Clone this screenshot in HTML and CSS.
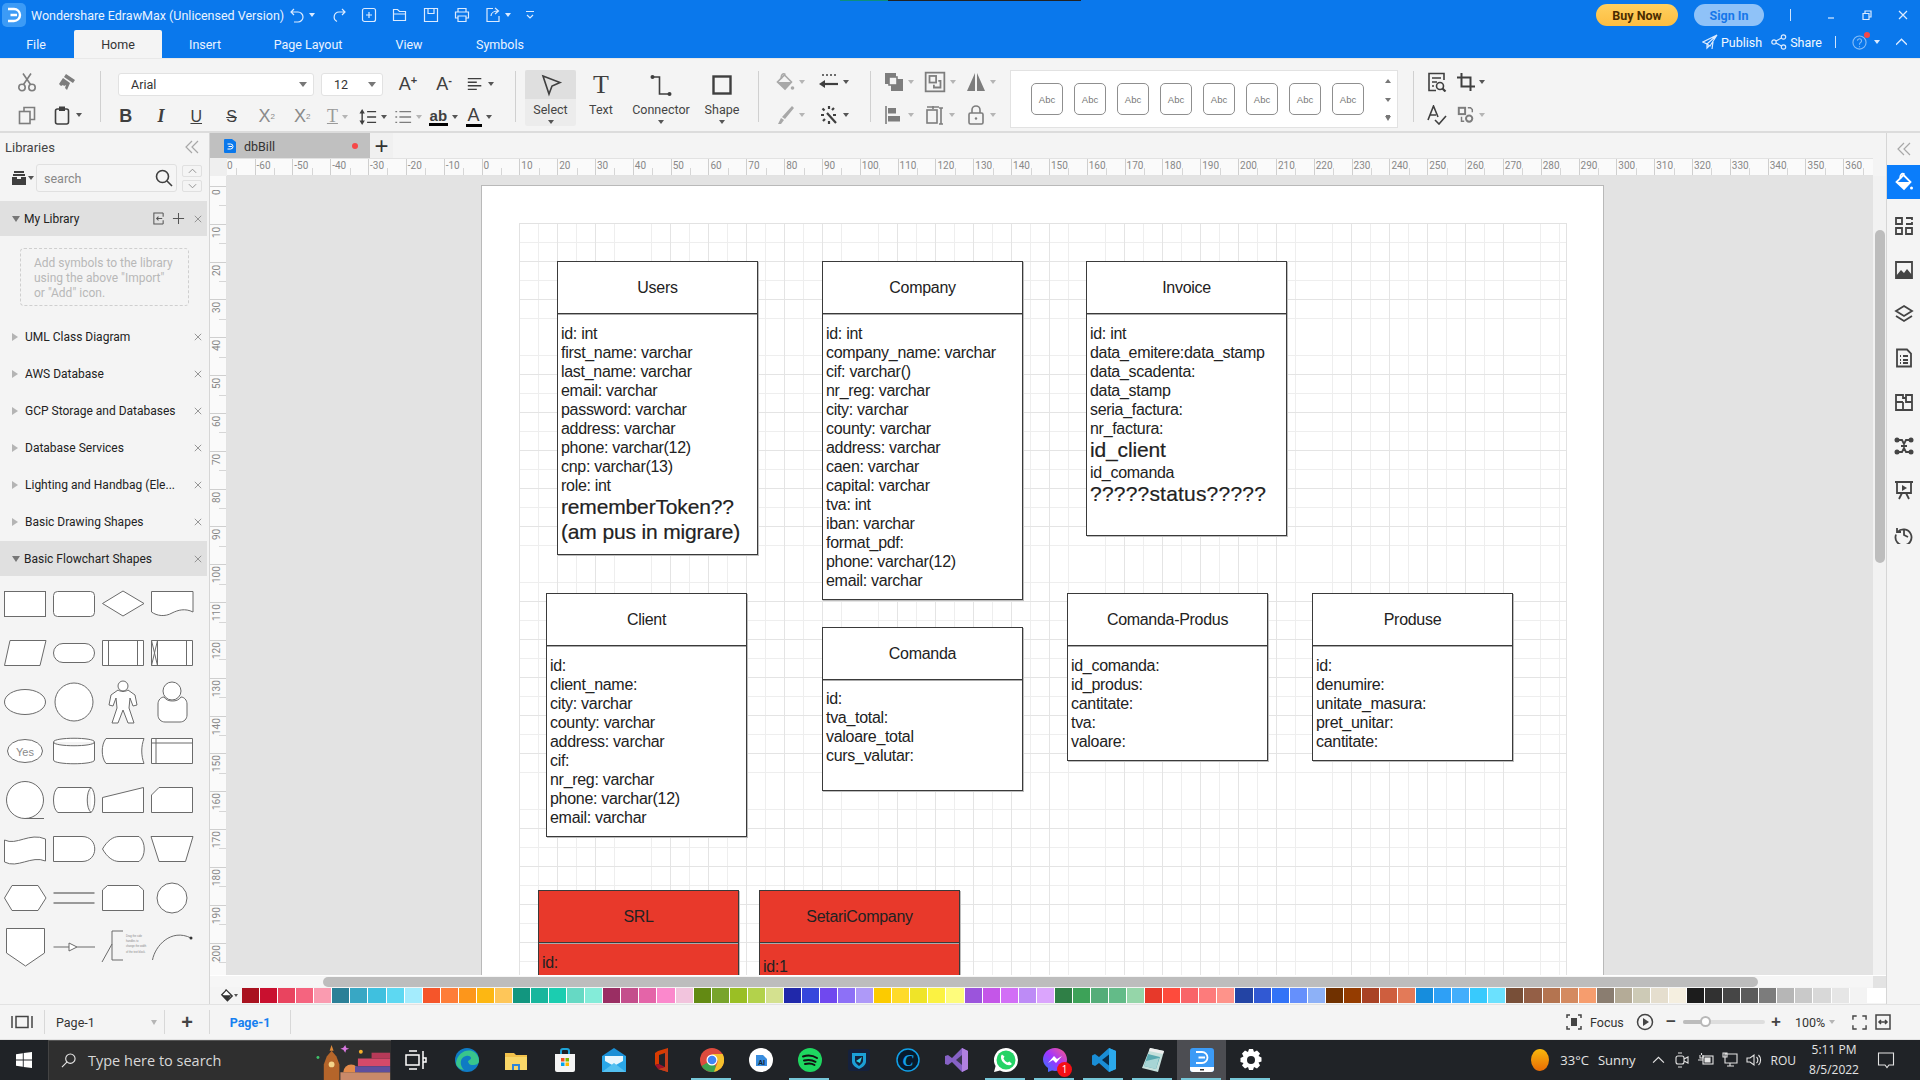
FILE: index.html
```html
<!DOCTYPE html>
<html lang="en">
<head>
<meta charset="utf-8">
<title>Wondershare EdrawMax</title>
<link rel="stylesheet" href="styles.css">
</head>
<body>
<svg class="defs" aria-hidden="true">
  <symbol id="i-cut" viewBox="0 0 20 20"><circle cx="5" cy="15.500" r="3.200"/><circle cx="15" cy="15.500" r="3.200"/><path d="M6.500 12.500 14 1.500M13.500 12.500 6 1.500"/></symbol>
  <symbol id="i-painter" viewBox="0 0 20 20"><path class="f" d="M9 2l9 6-2 3-9-6zM6 6l7 5-3 7-2-2 1-3-2 1-1-1-2 1-2-2z"/></symbol>
  <symbol id="i-copy" viewBox="0 0 20 20"><rect x="2.500" y="6.500" width="10.500" height="12"/><path d="M7 6V2.500h10.500V14.500H13"/></symbol>
  <symbol id="i-paste" viewBox="0 0 20 20"><rect x="3.500" y="4" width="13" height="15" rx="2"/><rect class="f" x="7" y="1.500" width="6" height="4.500"/></symbol>
  <symbol id="i-alignl" viewBox="0 0 20 20"><path d="M2 4h15M2 8h10M2 12h15M2 16h10"/></symbol>
  <symbol id="i-spacing" viewBox="0 0 20 20"><path d="M9 4h10M9 10h10M9 16h10"/><path class="f" d="M3.500 1 6.500 6h-6zM3.500 19l3-5h-6z"/><path d="M3.500 5v10"/></symbol>
  <symbol id="i-list" viewBox="0 0 20 20"><path d="M6 4h13M6 10h13M6 16h13M1.500 4h2M1.500 10h2M1.500 16h2"/></symbol>
  <symbol id="i-select" viewBox="0 0 24 24"><path d="M4 3 21 9.500 13 13 10 21z"/></symbol>
  <symbol id="i-connector" viewBox="0 0 24 24"><circle class="f" cx="3.500" cy="4" r="2"/><circle class="f" cx="20.500" cy="21" r="2"/><path d="M4 4h6.500v17h9"/></symbol>
  <symbol id="i-shape" viewBox="0 0 24 24"><rect x="3.500" y="3.500" width="17" height="17"/></symbol>
  <symbol id="i-bucket" viewBox="0 0 20 20"><path d="M9.500 3l7 7-6.500 7-7.500-7z"/><path class="f" d="M3 10h13.500L10 17z"/><path d="M6.500 7C5.500 3 8 0.500 10.500 2.500"/><circle class="f" cx="17.500" cy="16" r="1.800"/></symbol>
  <symbol id="i-linestyle" viewBox="0 0 20 20"><path d="M3 3h2M7 3h2M11 3h2M15 3h2"/><path class="thick" d="M5 12h14"/><path class="f" d="M0 12l6-4v8z"/></symbol>
  <symbol id="i-pen" viewBox="0 0 20 20"><path class="f" d="M17 1l2 2-9 11-3-2zM6 13l3 2-3 4-3 0z"/></symbol>
  <symbol id="i-magic" viewBox="0 0 20 20"><path class="thick" d="M8 8l9 10M10 1v3M2 10h3M3.500 3.500l2 2M15 3l-2 2M4 16l2-2M17 10h-3M10 16v3"/></symbol>
  <symbol id="i-front" viewBox="0 0 20 20"><rect class="f" x="1" y="1" width="11" height="11"/><rect class="f" x="7" y="7" width="12" height="12"/><rect class="w" x="5" y="5" width="8" height="8"/></symbol>
  <symbol id="i-group" viewBox="0 0 20 20"><rect x="1.500" y="1.500" width="17" height="17"/><rect x="5" y="4.500" width="6" height="6"/><path d="M9 12.500v2.500h6V9h-2"/></symbol>
  <symbol id="i-flip" viewBox="0 0 20 20"><path class="f" d="M9 1v18H1zM11 1v18h8z"/></symbol>
  <symbol id="i-align2" viewBox="0 0 20 20"><path d="M2 1v18"/><rect class="f" x="4" y="3" width="8" height="5.500"/><rect class="f" x="4" y="11" width="12" height="5.500"/></symbol>
  <symbol id="i-dist" viewBox="0 0 20 20"><path d="M2 2h12M8 1v3"/><rect x="2" y="5" width="10" height="13"/><path d="M16 3v16M14 3h4M14 19h4"/></symbol>
  <symbol id="i-lock" viewBox="0 0 20 20"><rect x="3" y="8" width="14" height="11" rx="1.500"/><path d="M6 8V5a4 4 0 0 1 8 0v3"/><circle class="f" cx="10" cy="13.500" r="1.200"/></symbol>
  <symbol id="i-find" viewBox="0 0 20 20"><path d="M17 8V1.500H2v17h7M5 6h9M5 10h5M5 14h2"/><circle cx="13" cy="14" r="3.500"/><path class="thick" d="M15.500 16.500 18.500 19.500"/></symbol>
  <symbol id="i-crop" viewBox="0 0 20 20"><path class="thick" d="M5 0v15h15M0 5h15v15"/></symbol>
  <symbol id="i-spell" viewBox="0 0 20 20"><path d="M1 15 6.500 1 11 12M3 10h6M8 15l4 4 7-8"/></symbol>
  <symbol id="i-replace" viewBox="0 0 20 20"><rect class="thick" x="2" y="2" width="7" height="7"/><circle class="thick" cx="13.500" cy="14" r="3.500"/><path d="M12 2h3l2 2v3M5 12v5h3"/></symbol>
  <symbol id="i-chev2" viewBox="0 0 14 14"><path d="M7 1 1 7l6 6M13 1 7 7l6 6"/></symbol>
  <symbol id="i-x" viewBox="0 0 10 10"><path d="M1 1l8 8M9 1 1 9"/></symbol>
  <symbol id="i-search" viewBox="0 0 18 18"><circle cx="7.500" cy="7.500" r="6"/><path d="M12 12l5 5"/></symbol>
</svg>

<div class="app">
  <div class="load-strip"></div>
  <header class="titlebar">
    <div class="title-row">
      <svg class="logo" viewBox="0 0 24 24"><rect width="24" height="24" rx="5" fill="#3c9bf6"/><path d="M6 6h6a6 6 0 0 1 0 12H6M8.500 12H15" fill="none" stroke="#fff" stroke-width="2.400"/></svg>
      <span class="app-title">Wondershare EdrawMax (Unlicensed Version)</span>
      <div class="qat">
        <svg class="qi w16" viewBox="0 0 16 16"><path d="M5 2 2 5l3 3M2 5h7a5 5 0 0 1 0 10H5"/></svg><i class="caret c-w q-c1"></i>
        <svg class="qi w16 q-redo" viewBox="0 0 16 16"><path d="M11 2l3 3-3 3M14 5H8a5 5 0 0 0-2 9.500"/></svg>
        <svg class="qi w16 q-new" viewBox="0 0 16 16"><rect x="1.500" y="1.500" width="13" height="13" rx="2"/><path d="M8 5v6M5 8h6"/></svg>
        <svg class="qi w16 q-n" viewBox="0 0 16 16"><path d="M1.500 13.500v-11h4l2 2h6v9zM1.500 7h12"/></svg>
        <svg class="qi w16 q-n" viewBox="0 0 16 16"><path d="M1.500 1.500h13v13h-13zM5 1.500v5h6v-5"/></svg>
        <svg class="qi w16 q-n" viewBox="0 0 16 16"><path d="M4 5V1.500h8V5M4 11H1.500V5h13v6H12M4 9h8v5.500H4z"/></svg>
        <svg class="qi w16 q-n" viewBox="0 0 16 16"><path d="M8 1.500H2v13h12V9M6 9c0-3 3-5 7-5M10 1l3.500 3L10 7"/></svg><i class="caret c-w q-c1"></i>
        <svg class="qi w10 q-more" viewBox="0 0 10 10"><path d="M1 1.500h8M2 5l3 3 3-3"/></svg>
      </div>
      <div class="grow"></div>
      <button class="pill buy">Buy Now</button>
      <button class="pill sign">Sign In</button>
      <span class="v-tick"></span>
      <div class="winctl">
        <svg class="qi w10" viewBox="0 0 10 10"><path d="M2 8h6"/></svg>
        <svg class="qi w10" viewBox="0 0 10 10"><path d="M1 3.500h6v6H1zM3 3.500V1h6v6H7"/></svg>
        <svg class="qi w10" viewBox="0 0 10 10"><path d="M1 1l8 8M9 1 1 9"/></svg>
      </div>
    </div>
    <div class="tab-row">
      <nav class="tabs">
        <span class="tab t-file">File</span>
        <span class="tab t-home">Home</span>
        <span class="tab t-insert">Insert</span>
        <span class="tab t-layout">Page Layout</span>
        <span class="tab t-view">View</span>
        <span class="tab t-symbols">Symbols</span>
      </nav>
      <div class="grow"></div>
      <div class="share">
        <svg class="qi w16" viewBox="0 0 16 16"><path d="M15 1 1 8l4 2 10-9-7 11-3-2v4l2-2M11 8l-1 7"/></svg>
        <span class="sh-t">Publish</span>
        <svg class="qi w16 sh-ic" viewBox="0 0 16 16"><circle cx="3" cy="8" r="2.200"/><circle cx="12.500" cy="3" r="2.200"/><circle cx="12.500" cy="13" r="2.200"/><path d="M5 7l5.500-3M5 9l5.500 3"/></svg>
        <span class="sh-t">Share</span>
        <span class="v-tick sh-sep"></span>
        <span class="help"><svg class="qi help-ic" viewBox="0 0 16 16"><circle cx="8" cy="8" r="7"/><path d="M5.800 6a2.200 2.200 0 1 1 3 2.200C8 8.600 8 9.400 8 10.500M8 12v1"/></svg><b class="dot"></b></span>
        <i class="caret c-w h-c"></i>
        <svg class="qi w10 up" viewBox="0 0 10 10"><path d="M0 7l5-5 5 5"/></svg>
      </div>
    </div>
  </header>

  <section class="ribbon">
    <div class="rb g-clip">
      <span class="cell"><svg class="ic mid"><use href="#i-cut"/></svg></span>
      <span class="cell"><svg class="ic mid"><use href="#i-painter"/></svg></span>
      <span class="cell"><svg class="ic mid"><use href="#i-copy"/></svg></span>
      <span class="cell"><svg class="ic dark"><use href="#i-paste"/></svg><i class="caret"></i></span>
    </div>
    <span class="sep"></span>
    <div class="rb g-font">
      <div class="font-top">
        <span class="sel s-font">Arial<i class="caret c-sel"></i></span>
        <span class="sel s-size">12<i class="caret c-sel"></i></span>
        <span class="fbtn big-a">A<sup>+</sup></span>
        <span class="fbtn big-a">A<sup>-</sup></span>
        <span class="fbtn"><svg class="ic dark ic18"><use href="#i-alignl"/></svg><i class="caret"></i></span>
      </div>
      <div class="font-bot">
        <span class="fbtn t-b">B</span>
        <span class="fbtn t-i">I</span>
        <span class="fbtn t-u">U</span>
        <span class="fbtn t-s">S</span>
        <span class="fbtn t-x">X<sup>2</sup></span>
        <span class="fbtn t-x">X<sub>2</sub></span>
        <span class="fbtn t-t">T<i class="caret c-l"></i></span>
        <span class="fbtn"><svg class="ic dark ic18"><use href="#i-spacing"/></svg><i class="caret"></i></span>
        <span class="fbtn"><svg class="ic mid ic18"><use href="#i-list"/></svg><i class="caret c-l"></i></span>
        <span class="fbtn t-ab"><em>ab</em><i class="caret"></i></span>
        <span class="fbtn t-ca"><em>A</em><i class="caret"></i></span>
      </div>
    </div>
    <span class="sep"></span>
    <div class="rb g-tools">
      <div class="tool active"><span class="tool-top"><svg class="ic dark ic24"><use href="#i-select"/></svg></span><span class="tool-l">Select</span><i class="caret"></i></div>
      <div class="tool w50"><span class="tool-top big-t">T</span><span class="tool-l">Text</span></div>
      <div class="tool w70"><span class="tool-top"><svg class="ic dark ic24"><use href="#i-connector"/></svg></span><span class="tool-l">Connector</span><i class="caret"></i></div>
      <div class="tool w52"><span class="tool-top"><svg class="ic dark ic24 bold"><use href="#i-shape"/></svg></span><span class="tool-l">Shape</span><i class="caret"></i></div>
    </div>
    <span class="sep"></span>
    <div class="rb g-style">
      <span class="cell c44"><svg class="ic light"><use href="#i-bucket"/></svg><i class="caret c-l"></i></span>
      <span class="cell c44"><svg class="ic dark"><use href="#i-linestyle"/></svg><i class="caret"></i></span>
      <span class="cell c44"><svg class="ic light"><use href="#i-pen"/></svg><i class="caret c-l"></i></span>
      <span class="cell c44"><svg class="ic dark"><use href="#i-magic"/></svg><i class="caret"></i></span>
    </div>
    <span class="sep"></span>
    <div class="rb g-arr">
      <span class="cell c41"><svg class="ic mid"><use href="#i-front"/></svg><i class="caret c-l"></i></span>
      <span class="cell c41"><svg class="ic mid ic22"><use href="#i-group"/></svg><i class="caret c-l"></i></span>
      <span class="cell c41"><svg class="ic mid"><use href="#i-flip"/></svg><i class="caret c-l"></i></span>
      <span class="cell c41"><svg class="ic mid"><use href="#i-align2"/></svg><i class="caret c-l"></i></span>
      <span class="cell c41"><svg class="ic mid"><use href="#i-dist"/></svg><i class="caret c-l"></i></span>
      <span class="cell c41"><svg class="ic mid"><use href="#i-lock"/></svg><i class="caret c-l"></i></span>
    </div>
    <div class="gallery">
      <span class="abc">Abc</span><span class="abc">Abc</span><span class="abc">Abc</span><span class="abc">Abc</span>
      <span class="abc">Abc</span><span class="abc">Abc</span><span class="abc">Abc</span><span class="abc">Abc</span>
      <div class="gal-arrows"><i class="caret c-up"></i><i class="caret"></i><i class="caret c-more"></i></div>
    </div>
    <span class="sep sep-last"></span>
    <div class="rb g-last">
      <span class="cell c34"><svg class="ic dark"><use href="#i-find"/></svg></span>
      <span class="cell c34"><svg class="ic dark ic18"><use href="#i-crop"/></svg><i class="caret"></i></span>
      <span class="cell c34"><svg class="ic dark"><use href="#i-spell"/></svg></span>
      <span class="cell c34"><svg class="ic mid ic18"><use href="#i-replace"/></svg><i class="caret c-l"></i></span>
    </div>
  </section>

  <main class="workspace">
    <aside class="libs">
      <div class="libs-head"><span>Libraries</span><svg class="ic light ic14"><use href="#i-chev2"/></svg></div>
      <div class="search-row">
        <svg class="drawer" viewBox="0 0 16 16"><path d="M3 1h10v2H3zM2 4h12v2H2zM1 7h5v2h4V7h5v8H1z"/></svg><i class="caret"></i>
        <span class="search"><span>search</span><svg class="ic dark ic18 s-ic"><use href="#i-search"/></svg></span>
        <span class="updown"><span><svg class="tiny" viewBox="0 0 10 6"><path d="M1 5l4-4 4 4"/></svg></span><span><svg class="tiny" viewBox="0 0 10 6"><path d="M1 1l4 4 4-4"/></svg></span></span>
      </div>
      <div class="lib-item my-lib">
        <i class="tri down"></i><span class="lib-name">My Library</span>
        <svg class="tiny14" viewBox="0 0 14 14"><path d="M12 1H2v12h10M12 5V1M12 9v4M11 7H5M7 5 5 7l2 2"/></svg>
        <svg class="tiny14 t-plus" viewBox="0 0 14 14"><path d="M7 1v12M1 7h12"/></svg>
        <svg class="lib-x" viewBox="0 0 10 10"><use href="#i-x"/></svg>
      </div>
      <div class="dropbox">Add symbols to the library using the above "Import" or "Add" icon.</div>
      <div class="lib-item"><i class="tri"></i><span class="lib-name">UML Class Diagram</span><svg class="lib-x" viewBox="0 0 10 10"><use href="#i-x"/></svg></div>
      <div class="lib-item"><i class="tri"></i><span class="lib-name">AWS Database</span><svg class="lib-x" viewBox="0 0 10 10"><use href="#i-x"/></svg></div>
      <div class="lib-item"><i class="tri"></i><span class="lib-name">GCP Storage and Databases</span><svg class="lib-x" viewBox="0 0 10 10"><use href="#i-x"/></svg></div>
      <div class="lib-item"><i class="tri"></i><span class="lib-name">Database Services</span><svg class="lib-x" viewBox="0 0 10 10"><use href="#i-x"/></svg></div>
      <div class="lib-item"><i class="tri"></i><span class="lib-name">Lighting and Handbag (Ele...</span><svg class="lib-x" viewBox="0 0 10 10"><use href="#i-x"/></svg></div>
      <div class="lib-item"><i class="tri"></i><span class="lib-name">Basic Drawing Shapes</span><svg class="lib-x" viewBox="0 0 10 10"><use href="#i-x"/></svg></div>
      <div class="lib-item open"><i class="tri down"></i><span class="lib-name">Basic Flowchart Shapes</span><svg class="lib-x" viewBox="0 0 10 10"><use href="#i-x"/></svg></div>
      <div class="shapes">
        <svg viewBox="0 0 49 49"><rect x="4.500" y="12.500" width="41" height="25"/></svg>
        <svg viewBox="0 0 49 49"><rect x="4.500" y="12.500" width="41" height="25" rx="4"/></svg>
        <svg viewBox="0 0 49 49"><path d="M4.500 24.500 25 12l21 12.500L25 37z"/></svg>
        <svg viewBox="0 0 49 49"><path d="M4.500 12.500H46V33C38 29 31 31 25 34c-7 4-15 3-20.500-1z"/></svg>
        <svg viewBox="0 0 49 49"><path d="M4.500 37.500 10 12.500h36l-6 25z"/></svg>
        <svg viewBox="0 0 49 49"><rect x="4.500" y="15.500" width="41" height="19" rx="9.500"/></svg>
        <svg viewBox="0 0 49 49"><path d="M4.500 12.500h41v25h-41zM10.500 12.500v25M39.500 12.500v25"/></svg>
        <svg viewBox="0 0 49 49"><path d="M4.500 12.500h41v25h-41zM10.500 12.500v25M39.500 12.500v25M4.500 12.500l6 25M10.500 12.500l-6 25"/></svg>
        <svg viewBox="0 0 49 49"><ellipse cx="25" cy="25" rx="20.500" ry="12.500"/></svg>
        <svg viewBox="0 0 49 49"><circle cx="25" cy="25" r="19"/></svg>
        <svg viewBox="0 0 49 49"><circle cx="25" cy="9" r="5"/><path d="M20 13l-7 5-2 10 4 1 3-8 1 10-5 15h6l5-13 5 13h6l-5-15 1-10 3 8 4-1-2-10-7-5c-3 2-7 2-10 0z"/></svg>
        <svg viewBox="0 0 49 49"><circle cx="25" cy="14" r="9"/><path d="M17 20c-3 0-6 3-6 7v11c0 4 3 7 7 7h15c4 0 7-3 7-7V27c0-4-3-7-6-7-2 3-5 4-8.500 4S19 23 17 20z"/></svg>
        <svg viewBox="0 0 49 49"><ellipse cx="25" cy="25" rx="17.500" ry="11.500"/><text x="25" y="29.500" class="yes">Yes</text></svg>
        <svg viewBox="0 0 49 49"><path d="M4.500 16c0-5 41-5 41 0v18c0 5-41 5-41 0z M4.500 16c0 5 41 5 41 0"/></svg>
        <svg viewBox="0 0 49 49"><path d="M8 12.500h38c-3 8-3 17 0 25H8c-5-6-5-19 0-25z"/></svg>
        <svg viewBox="0 0 49 49"><path d="M4.500 12.500h41v25h-41zM9 12.500v25M4.500 17h41"/></svg>
        <svg viewBox="0 0 49 49"><circle cx="25" cy="25" r="18.500"/><path d="M25 43.500h19"/></svg>
        <svg viewBox="0 0 49 49"><path d="M9 12.500h33c5 4 5 21 0 25H9c-6-3-6-22 0-25zM42 12.500c-5 4-5 21 0 25"/></svg>
        <svg viewBox="0 0 49 49"><path d="M4.500 22.500 45.500 12.500v25h-41z"/></svg>
        <svg viewBox="0 0 49 49"><path d="M4.500 20 12 12.500h33.500v25h-41z"/></svg>
        <svg viewBox="0 0 49 49"><path d="M4.500 16c12 6 25-8 41-1v22c-14-6-28 8-41 1z"/></svg>
        <svg viewBox="0 0 49 49"><path d="M4.500 12.500H33c17 0 17 25 0 25H4.500z"/></svg>
        <svg viewBox="0 0 49 49"><path d="M4.500 25C9 17 15 12.500 21 12.500h20c7 5 7 20 0 25H21C15 37.500 9 33 4.500 25z"/></svg>
        <svg viewBox="0 0 49 49"><path d="M4 12.500h42l-7.500 25H12z"/></svg>
        <svg viewBox="0 0 49 49"><path d="M4.500 25 12 12.500h26L46 25l-8 12.500H12z"/></svg>
        <svg viewBox="0 0 49 49"><path class="thick-s" d="M4.500 20h41M4.500 30h41"/></svg>
        <svg viewBox="0 0 49 49"><path d="M4.500 37.500V17l5-4.500h31l5 4.500v20.500z"/></svg>
        <svg viewBox="0 0 49 49"><circle cx="25" cy="25" r="15"/></svg>
        <svg viewBox="0 0 49 49"><path d="M6.500 6.500h38V31l-19 13-19-13z"/></svg>
        <svg viewBox="0 0 49 49"><path d="M4.500 25H20M28 25h18M20 21l8 4-8 4z"/></svg>
        <svg viewBox="0 0 49 49"><path class="nofill" d="M25 9H14v29h11M14 22 4 40"/><text class="tb" x="28" y="15">Drag the side</text><text class="tb" x="28" y="20">handles to</text><text class="tb" x="28" y="25">change the width</text><text class="tb" x="28" y="31">of the text block.</text></svg>
        <svg viewBox="0 0 49 49"><path class="nofill" d="M5.500 38C8 24 24 6 44 16"/><circle class="sf" cx="44" cy="16" r="1.500"/></svg>
      </div>
    </aside>

    <section class="center">
      <div class="docbar">
        <div class="doctab"><svg class="docic" viewBox="0 0 12 14"><path d="M0 1a1 1 0 0 1 1-1h7l4 3v10a1 1 0 0 1-1 1H1a1 1 0 0 1-1-1z" fill="#0a78ec"/><path d="M3.500 5h3a2 2 0 0 1 0 5h-3M4.500 7.500H8" fill="none" stroke="#fff" stroke-width="1"/></svg><span>dbBill</span><b class="unsaved"></b></div>
        <div class="docadd">+</div>
      </div>
      <div class="hruler-row"><span class="corner"></span><div class="hruler"><div class="hr-in" id="hr"></div></div><span class="ruler-end"></span></div>
      <div class="canvas-row">
        <div class="vruler"><div class="vr-in" id="vr"></div></div>
        <div class="canvas">
          <div class="page">
            <div class="grid"></div>
            <div class="entity e-users"><div class="e-head">Users</div><div class="e-body">id: int<br>first_name: varchar<br>last_name: varchar<br>email: varchar<br>password: varchar<br>address: varchar<br>phone: varchar(12)<br>cnp: varchar(13)<br>role: int<div class="big">rememberToken??<br>(am pus in migrare)</div></div></div>
            <div class="entity e-company"><div class="e-head">Company</div><div class="e-body">id: int<br>company_name: varchar<br>cif: varchar()<br>nr_reg: varchar<br>city: varchar<br>county: varchar<br>address: varchar<br>caen: varchar<br>capital: varchar<br>tva: int<br>iban: varchar<br>format_pdf:<br>phone: varchar(12)<br>email: varchar</div></div>
            <div class="entity e-invoice"><div class="e-head">Invoice</div><div class="e-body">id: int<br>data_emitere:data_stamp<br>data_scadenta:<br>data_stamp<br>seria_factura:<br>nr_factura:<div class="big">id_client</div>id_comanda<div class="big big-q">?????status?????</div></div></div>
            <div class="entity e-client"><div class="e-head">Client</div><div class="e-body">id:<br>client_name:<br>city: varchar<br>county: varchar<br>address: varchar<br>cif:<br>nr_reg: varchar<br>phone: varchar(12)<br>email: varchar</div></div>
            <div class="entity e-comanda"><div class="e-head">Comanda</div><div class="e-body">id:<br>tva_total:<br>valoare_total<br>curs_valutar:</div></div>
            <div class="entity e-cp"><div class="e-head">Comanda-Produs</div><div class="e-body">id_comanda:<br>id_produs:<br>cantitate:<br>tva:<br>valoare:</div></div>
            <div class="entity e-produse"><div class="e-head">Produse</div><div class="e-body">id:<br>denumire:<br>unitate_masura:<br>pret_unitar:<br>cantitate:</div></div>
            <div class="entity red e-srl"><div class="e-head">SRL</div><div class="e-body">id:</div></div>
            <div class="entity red e-setari"><div class="e-head">SetariCompany</div><div class="e-body">id:1</div></div>
          </div>
        </div>
        <div class="vscroll"><span class="vthumb"></span></div>
      </div>
      <div class="hscroll"><span class="hthumb"></span><span class="hs-end"></span></div>
      <div class="palette-row">
        <svg class="pal-ic" viewBox="0 0 16 16"><path d="M7 1l7 7-5.500 5.500-6.500-7 4-4z" fill="#fff" stroke="#333" stroke-width="1.500"/><path d="M2 7h11l-4.500 6.500z" fill="#333"/></svg><i class="caret pal-c"></i>
        <div class="swatches" id="sw"></div>
      </div>
    </section>

    <aside class="rail">
      <span class="rail-top"><svg class="ic light ic14"><use href="#i-chev2"/></svg></span>
      <span class="rail-btn on"><svg class="rail-ic" viewBox="0 0 20 20"><path class="rs" d="M9.500 3l7 7-6.500 7-7.500-7z"/><path class="rf" d="M3 10h13.500L10 17z"/><path class="rs" d="M6.500 7C5.500 3 8 .5 10.500 2.500"/><circle class="rf" cx="17.500" cy="16" r="1.500"/></svg></span>
      <span class="rail-btn"><svg class="rail-ic" viewBox="0 0 20 20"><path d="M2 2h6v6H2zM12 2h6v2M12 8h6V6M2 12h6v6H2zM12 12h6v6h-6z"/></svg></span>
      <span class="rail-btn"><svg class="rail-ic" viewBox="0 0 20 20"><path d="M2 2h16v16H2z"/><path class="rf2" d="M2 16l5-6 3 3 3-4 5 6v3H2z"/></svg></span>
      <span class="rail-btn"><svg class="rail-ic" viewBox="0 0 20 20"><path d="M10 2l8 5-8 5-8-5zM2 12l8 5 8-5"/></svg></span>
      <span class="rail-btn"><svg class="rail-ic" viewBox="0 0 20 20"><path d="M3 1.500h10l4 4v13H3zM6 8h1M9 8h5M6 12h1M9 12h5M6 15h1M9 15h5"/></svg></span>
      <span class="rail-btn"><svg class="rail-ic" viewBox="0 0 20 20"><path d="M2 3h7v3h3V3h6v15H2zM9 10H2M9 10v8M12 6v4h6"/></svg></span>
      <span class="rail-btn"><svg class="rail-ic" viewBox="0 0 20 20"><circle class="rf2" cx="3" cy="4" r="2.500"/><circle class="rf2" cx="17" cy="4" r="2.500"/><circle class="rf2" cx="3" cy="16" r="2.500"/><circle class="rf2" cx="17" cy="16" r="2.500"/><path d="M5 4h3l2 4 2-4h3M5 16h3l2-4 2 4h3M7 10h6"/></svg></span>
      <span class="rail-btn"><svg class="rail-ic" viewBox="0 0 20 20"><path d="M1 2h18M3 2v11h14V2M5 19l3-6M15 19l-3-6"/><path class="rf2" d="M8 5l5 3-5 3z"/></svg></span>
      <span class="rail-btn"><svg class="rail-ic" viewBox="0 0 20 20"><path d="M3 4v4h4M3.500 8A8 8 0 1 1 2 10.500M10 6v5l4 2"/></svg></span>
    </aside>
  </main>

  <footer class="statusbar">
    <svg class="st-ic st-pages" viewBox="0 0 22 14"><path d="M1 1v12M21 1v12M5 1.500h12v11H5z"/></svg>
    <span class="st-sep"></span>
    <span class="page-sel">Page-1<i class="caret c-l"></i></span>
    <span class="st-sep"></span>
    <span class="page-add">+</span>
    <span class="st-sep"></span>
    <span class="page-tab">Page-1</span>
    <span class="st-sep"></span>
    <div class="grow"></div>
    <svg class="st-ic st-focus" viewBox="0 0 16 16"><path d="M1 4V1h3M12 1h3v3M15 12v3h-3M4 15H1v-3"/><rect class="sfill" x="5" y="4" width="6" height="8"/></svg>
    <span class="st-focus-t">Focus</span>
    <svg class="st-ic st-play" viewBox="0 0 18 18"><circle cx="9" cy="9" r="7.500"/><path class="sfill" d="M7 5l6 4-6 4z"/></svg>
    <span class="zm zm-minus">−</span>
    <span class="slider"><span class="slider-fill"></span><span class="knob"></span></span>
    <span class="zm zm-plus">+</span>
    <span class="zoomval">100%<i class="caret c-l"></i></span>
    <svg class="st-ic st-full" viewBox="0 0 16 16"><path d="M1 5V1h4M11 1h4v4M15 11v4h-4M5 15H1v-4"/></svg>
    <svg class="st-ic st-fit" viewBox="0 0 16 16"><path d="M1 1h14v14H1zM4 8h8M6 6 4 8l2 2M10 6l2 2-2 2"/></svg>
  </footer>

  <footer class="taskbar">
    <svg class="start" viewBox="0 0 16 16"><path fill="#fff" d="M0 2.200 6.800 1.200V7.500H0zM7.700 1.100 16 0V7.500H7.700zM0 8.400h6.800v6.400L0 13.800zM7.700 8.400H16V16l-8.300-1.100z"/></svg>
    <div class="tsearch">
      <svg class="ts-ic" viewBox="0 0 16 16"><circle cx="10" cy="6" r="5"/><path d="M6.500 9.500 1 15"/></svg>
      <span class="ts-t">Type here to search</span>
      <svg class="ts-art" viewBox="0 0 72 40"><path d="M7 40V30h10v10z" fill="#c98a4e"/><path d="M4 40V24l3-8 5-6 5 6 3 8v16z" fill="#b5652a"/><path d="M10 10l2-6 2 6z" fill="#e08a3a"/><circle cx="12" cy="24" r="3" fill="#f4d58a"/><path d="M21 40V32h51v8z" fill="#c98a6a"/><path d="M24 32a8 8 0 0 1 16 0z" fill="#e38b4a"/><path d="M39 18h33v8H39z" fill="#d44a6a"/><path d="M53 12h19v6H53z" fill="#b63a58"/><path d="M36 26h36v6H36z" fill="#5e4f9e"/><path d="M24 7l2-3 1 3 3 1-3 1-1 3-2-3-3-1z" fill="#d877e0"/><circle cx="42" cy="11" r="2" fill="#f6b02c"/><circle cx="-2" cy="17" r="1.500" fill="#3ec06a"/></svg>
    </div>
    <div class="tk-icons">
      <span class="tk"><svg viewBox="0 0 24 24"><path d="M2 7h13v10H2zM5 3h8M5 21h8M19 3v18M19 10h3v4h-3" fill="none" stroke="#fff" stroke-width="1.500"/></svg></span>
      <span class="tk tk-gap"><svg viewBox="0 0 24 24"><circle cx="12" cy="12" r="12" fill="#0f7bc4"/><path d="M1 15C2 6 10 1 17 3c5 2 7 6 7 10 0 3-3 4-6 4-4 0-5-2-5-3 0-2 3-2 3-4 0-1-2-3-5-2C5 9 4 17 9 22 4 21 1 18 1 15z" fill="#38c58c"/><circle cx="12" cy="16" r="2" fill="#0f7bc4"/></svg></span>
      <span class="tk"><svg viewBox="0 0 24 24"><path d="M1 5h9l2 2h11v15H1z" fill="#f2c14b"/><path d="M1 9h22v13H1z" fill="#f9d768"/><path d="M8 16h8v6H8z" fill="#2f86d8"/><path d="M10 18h4v4h-4z" fill="#f9d768"/></svg></span>
      <span class="tk"><svg viewBox="0 0 24 24"><path d="M8 6V3a2 2 0 0 1 2-2h4a2 2 0 0 1 2 2v3" fill="none" stroke="#1ea4d8" stroke-width="2"/><path d="M2 6h20v16a2 2 0 0 1-2 2H4a2 2 0 0 1-2-2z" fill="#f4f4f4"/><path fill="#f25022" d="M8 10h3.500v3.500H8z"/><path fill="#7fba00" d="M12.500 10H16v3.500h-3.500z"/><path fill="#00a4ef" d="M8 14.500h3.500V18H8z"/><path fill="#ffb900" d="M12.500 14.500H16V18h-3.500z"/></svg></span>
      <span class="tk"><svg viewBox="0 0 24 24"><path d="M0 8 12 0l12 8v16H0z" fill="#1a8fd6"/><path d="M0 8h24v16H0z" fill="#2aa7e8"/><path d="M3 8h18v5l-9 5-9-5z" fill="#e8f6fd"/><path d="M0 24 12 15l12 9z" fill="#53c0f0"/></svg></span>
      <span class="tk"><svg viewBox="0 0 24 24"><path d="M7 3l10-3v24L7 21l7-2V5l-6 2v9l-4 1V5z" fill="#d83b01"/><path d="M14 5v14l-7 2 10 3V0z" fill="#c43e1c"/><path d="M8 7v9l-4 1 3 4 7-2v0L8 16z" fill="#a3112a"/></svg></span>
      <span class="tk run"><svg viewBox="0 0 24 24"><circle cx="12" cy="12" r="12" fill="#dd4b3e"/><path d="M1.600 18 12 12l6 10.400A12 12 0 0 1 1.600 18z" fill="#3da350"/><path d="M12 6h10.600A12 12 0 0 1 14 23.800L18 13z" fill="#f5c02c"/><circle cx="12" cy="12" r="5.500" fill="#fff"/><circle cx="12" cy="12" r="4.300" fill="#4285f4"/></svg></span>
      <span class="tk"><svg viewBox="0 0 24 24"><circle cx="12" cy="12" r="12" fill="#fff"/><path d="M7 7h7l4 4v7H7z" fill="#3a8dde"/><text class="ai" x="12.500" y="17">AI</text></svg></span>
      <span class="tk run"><svg viewBox="0 0 24 24"><circle cx="12" cy="12" r="12" fill="#1ed760"/><path d="M5 8.500c5-1.500 10-1 14 1.500M6 12.500c4-1 8-.8 11.500 1.300M7 16c3.500-1 7-.7 9.500 1" fill="none" stroke="#111" stroke-width="2" stroke-linecap="round"/></svg></span>
      <span class="tk"><svg viewBox="0 0 24 24"><rect x="1" y="1" width="22" height="22" rx="3" fill="#15213d"/><path d="M5 5h14v8c0 4-3 6-7 8-4-2-7-4-7-8z" fill="#1c9fd8"/><path d="M8 8h8v5c0 2-2 3-4 5-2-2-4-3-4-5z" fill="#15213d"/><path d="M9 13l6-4-2 6z" fill="#2fd0e8"/></svg></span>
      <span class="tk"><svg viewBox="0 0 24 24"><circle cx="12" cy="12" r="11" fill="#071a2c" stroke="#11a0e8" stroke-width="1.500"/><text class="cc" x="12" y="18">C</text></svg></span>
      <span class="tk"><svg viewBox="0 0 24 24"><path d="M17 0l6 3v18l-6 3L7 14l-4 3-3-1V8l3-1 4 3z" fill="#8661c5"/><path d="M17 0l6 3v18l-6 3z" fill="#b180e0"/><path d="M17 7v10l-6-5z" fill="#3a3550"/></svg></span>
      <span class="tk run"><svg viewBox="0 0 24 24"><path d="M12 0a12 12 0 0 1 0 24c-2 0-4-.5-6-1.500L0 24l1.600-6A12 12 0 0 1 12 0z" fill="#fff"/><circle cx="12" cy="12" r="9.500" fill="#25d366"/><path d="M8 6.500c-2 2-1 6 2 8.500 3 2.500 6 3 8 1l-2.500-2.500-2 1c-2-1-3-2-4-4l1-2z" fill="#fff"/></svg></span>
      <span class="tk run"><svg viewBox="0 0 24 24"><defs><linearGradient id="msg" x1="0" y1="1" x2="1" y2="0"><stop offset="0" stop-color="#2a7bff"/><stop offset=".5" stop-color="#a033ff"/><stop offset="1" stop-color="#ff5c87"/></linearGradient></defs><path d="M12 0c6.600 0 12 5 12 11.500S18.600 23 12 23c-1 0-2-.1-3-.4L5 24v-4C2 18 0 15 0 11.500 0 5 5.400 0 12 0z" fill="url(#msg)"/><path d="M5 15l6-7 3 3 5-3-6 7-3-3z" fill="#fff"/></svg><b class="badge">1</b></span>
      <span class="tk run"><svg viewBox="0 0 24 24"><path d="M17 0l7 3v18l-7 3L7 15l-4 3-3-1.500v-9L3 6l4 3z" fill="#1a8ed6"/><path d="M17 0l7 3v18l-7 3z" fill="#2ba9ec"/><path d="M17 6.500v11L10 12z" fill="#0b2b45"/></svg></span>
      <span class="tk run"><svg viewBox="0 0 24 24"><path d="M9 0l14 3-6 21L1 20z" fill="#c6e0dc"/><path d="M7 6l12 3-4 12L3 18z" fill="#58a8b0"/><path d="M5 13l13-3-3 11L3 18z" fill="#a7d5d5"/><path d="M9 0l14 3-1 3L8 3z" fill="#eee"/></svg></span>
      <span class="tk run active-app"><svg viewBox="0 0 24 24"><rect width="24" height="24" rx="3" fill="#3c9bf6"/><path d="M0 19h24v2a3 3 0 0 1-3 3H3a3 3 0 0 1-3-3z" fill="#fff"/><path d="M6 4h6a5.500 5.500 0 0 1 0 11H6M8.500 9.500H15" fill="none" stroke="#fff" stroke-width="1.800"/><path d="M10 21h4v1.500h-4z" fill="#333"/></svg></span>
      <span class="tk run"><svg viewBox="0 0 24 24"><path d="M10 1h4l1 3 3-1.500 3 3L19.500 8l3 1.500v4l-3 1 1.500 3-3 3-3-1.500-1 3h-4l-1-3-3 1.500-3-3L4.500 15l-3-1v-4l3-1.500L3 5.500l3-3L9 4z" fill="#fff"/><circle cx="12" cy="12" r="4" fill="#202327"/></svg></span>
    </div>
    <div class="grow"></div>
    <div class="tray">
      <span class="sun"></span>
      <span class="tr-temp">33°C</span>
      <span class="tr-cond">Sunny</span>
      <svg class="tr-ic tr-chev" viewBox="0 0 12 12"><path d="M1 8l5-5 5 5"/></svg>
      <svg class="tr-ic" viewBox="0 0 16 16"><rect x="2" y="4" width="8" height="8" rx="2"/><path d="M10 7l4-2v6l-4-2M4 1h4M4 15h4"/></svg>
      <svg class="tr-ic" viewBox="0 0 16 16"><rect x="5" y="4" width="10" height="8"/><rect class="tf" x="7" y="6" width="5" height="4"/><path d="M0 8h5M2 3v3h3V3M3.500 1v2"/></svg>
      <svg class="tr-ic" viewBox="0 0 16 16"><path d="M3 2h12v9H3zM8 11v3M5 14h7M1 1h4v4H1z"/></svg>
      <svg class="tr-ic" viewBox="0 0 16 16"><path d="M1 6v4h3l4 3V3L4 6zM10.500 5a4 4 0 0 1 0 6M12.500 3a7 7 0 0 1 0 10"/></svg>
      <span class="tr-lang">ROU</span>
      <span class="tr-clock"><span>5:11 PM</span><span>8/5/2022</span></span>
      <svg class="tr-ic tr-notif" viewBox="0 0 18 18"><path d="M1.500 2h15v12H12l-2 2.500L8 14H1.500z"/></svg>
    </div>
  </footer>
</div>
<script src="script.js"></script>
</body>
</html>
```

FILE: styles.css
```css
* { box-sizing: border-box; }
html, body { margin: 0; height: 100%; overflow: hidden; }
body { font-family: Roboto, "Noto Sans", sans-serif; font-size: 12px; color: #333; background: #f4f4f4; }
button { font: inherit; border: 0; padding: 0; }
.defs { position: absolute; width: 0; height: 0; }
.grow { flex: 1; }
.app { position: relative; display: flex; flex-direction: column; width: 1920px; height: 1080px; }
.load-strip { position: absolute; left: 840px; top: 0; width: 241px; height: 1px; background: linear-gradient(90deg, #0d8f7c 0 20%, #222 20%); }

/* shared icon styling */
.ic { width: 20px; height: 20px; fill: none; stroke: currentColor; stroke-width: 1.6; flex: none; }
.ic .f, .f { fill: currentColor; stroke: none; }
.w { fill: #f4f4f4; stroke: currentColor; }
.thick { stroke-width: 2.2; }
.dark { color: #3f3f3f; }
.mid { color: #7d7d7d; }
.light { color: #a8a8a8; }
.ic14 { width: 14px; height: 14px; stroke-width: 1.2; }
.ic18 { width: 18px; height: 18px; }
.ic22 { width: 22px; height: 22px; }
.ic24 { width: 24px; height: 24px; }
.bold { stroke-width: 2.4; }
.caret { display: inline-block; width: 0; height: 0; border: 3px solid transparent; border-top: 4px solid #555; border-bottom: 0; flex: none; margin-left: 4px; }
.c-l { border-top-color: #b5b5b5; }
.c-w { border-top-color: #dcebff; }
.c-sel { border-top-color: #777; border-left-width: 4px; border-right-width: 4px; border-top-width: 5px; margin-left: auto; }

/* title bar */
.titlebar { flex: none; height: 58px; background: #0a78ec; color: #fff; }
.title-row { display: flex; align-items: center; height: 30px; padding: 2px 0 2px 2px; }
.logo { width: 24px; height: 24px; flex: none; }
.app-title { margin-left: 5px; width: 256px; font-size: 12.500px; white-space: nowrap; color: #e9f3ff; }
.qat { display: flex; align-items: center; margin-left: 2px; }
.qi { fill: none; stroke: #dcebff; stroke-width: 1.2; flex: none; }
.w16 { width: 16px; height: 16px; }
.w10 { width: 10px; height: 10px; }
.q-c1 { margin-left: 4px; margin-right: 0; }
.q-redo { margin-left: 16px; }
.q-new { margin-left: 14px; }
.q-n { margin-left: 15px; }
.q-more { margin-left: 14px; }
.pill { height: 22px; border-radius: 11px; font-size: 12.500px; font-weight: 700; flex: none; }
.buy { width: 82px; background: linear-gradient(#ffd05f, #fdbd41); color: #4b2c00; }
.sign { width: 70px; margin-left: 16px; background: #8fc2f8; color: #1677ea; }
.v-tick { width: 1px; height: 12px; margin-left: 26px; background: #cfe3fb; flex: none; }
.winctl { display: flex; align-items: center; margin-left: 35px; gap: 26px; padding-right: 12px; }
.tab-row { display: flex; height: 28px; }
.tabs { display: flex; }
.tab { display: flex; align-items: center; justify-content: center; font-size: 12.500px; color: #eaf3ff; height: 28px; }
.t-file { width: 74px; padding-right: 2px; }
.t-home { width: 88px; background: #f4f4f4; color: #333; border-radius: 2px 2px 0 0; }
.t-insert { width: 86px; }
.t-layout { width: 120px; }
.t-view { width: 82px; }
.t-symbols { width: 100px; }
.share { display: flex; align-items: center; height: 24px; padding-right: 13px; }
.sh-t { font-size: 12.500px; margin-left: 3px; color: #f2f8ff; }
.sh-ic { margin-left: 9px; }
.sh-sep { margin-left: 13px; height: 12px; }
.help { position: relative; display: flex; margin-left: 16px; }
.help-ic { width: 15px; height: 15px; stroke: #86bdf7; }
.dot { position: absolute; right: -3px; top: -3px; width: 6px; height: 6px; border-radius: 50%; background: #f64848; }
.h-c { margin-left: 7px; }
.up { margin-left: 16px; width: 11px; height: 11px; }

/* ribbon */
.ribbon { flex: none; display: flex; height: 75px; background: #f4f4f4; border-bottom: 2px solid #dcdcdc; border-top: 1px solid #e8e8e8; }
.rb { padding-top: 6px; display: grid; align-content: start; grid-auto-rows: 33px; }
.sep { width: 1px; height: 51px; margin-top: 12px; background: #d0d0d0; flex: none; }
.cell { display: flex; align-items: center; justify-content: center; }
.g-clip { width: 100px; padding-left: 7px; grid-template-columns: repeat(2, 40px); }
.g-font { width: 414px; display: block; padding-left: 7px; }
.font-top { display: flex; align-items: center; height: 33px; padding-left: 10px; padding-top: 5px; }
.font-bot { display: flex; align-items: center; height: 33px; margin-top: 2px; }
.font-bot .fbtn { width: 35.300px; }
.fbtn { display: flex; align-items: center; justify-content: center; width: 36px; flex: none; color: #3f3f3f; font-family: "Liberation Sans", sans-serif; }
.sel { display: flex; align-items: center; height: 23px; background: #fff; border: 1px solid #e2e2e2; border-radius: 3px; padding: 0 6px 0 12px; font-size: 12.500px; flex: none; color: #333; }
.s-font { width: 196px; }
.s-size { width: 62px; margin-left: 7px; }
.big-a { font-size: 18px; }
.s-size + .big-a { margin-left: 7px; }
.big-a sup { font-size: 11px; line-height: 1; margin-top: -8px; font-weight: 700; }
.t-b { font-size: 18px; font-weight: 700; }
.t-i { font-size: 18px; font-style: italic; font-family: "Liberation Serif", serif; font-weight: 700; }
.t-u { font-size: 16px; text-decoration: underline; }
.t-s { font-size: 16px; text-decoration: line-through; }
.t-x { font-size: 18px; color: #8a8a8a; }
.t-x sup, .t-x sub { font-size: 8px; }
.t-t { font-size: 18px; font-family: "Liberation Serif", serif; color: #9a9a9a; text-decoration: underline; }
.t-ab em, .t-ca em { font-style: normal; font-size: 15px; border-bottom: 3px solid #000; line-height: 15px; padding: 0 1px; }
.t-ab em { font-weight: 700; }
.t-ca em { font-size: 18px; line-height: 17px; padding: 0 2px; }
.g-tools { width: 242px; display: flex; padding: 11px 0 0 9px; }
.tool { display: flex; flex-direction: column; align-items: center; width: 51px; height: 56px; flex: none; }
.tool.active { background: #ececec; border-radius: 2px; }
.tool-top { display: flex; align-items: center; justify-content: center; width: 100%; height: 29px; flex: none; }
.active .tool-top { background: #dfdfdf; border-radius: 2px 2px 0 0; }
.tool-l { font-size: 12.500px; line-height: 21px; color: #444; white-space: nowrap; }
.tool .caret { margin: 0; }
.w50 { width: 50px; }
.w70 { width: 70px; }
.w52 { width: 52px; }
.big-t { font-family: "Liberation Serif", serif; font-size: 26px; color: #3f3f3f; }
.g-style { width: 111px; padding-left: 9px; grid-template-columns: repeat(2, 44px); }
.c44 { width: 44px; }
.g-arr { width: 129px; padding-left: 7px; grid-template-columns: repeat(3, 41px); }
.gallery { display: flex; align-items: center; flex: none; width: 388px; height: 58px; margin: 11px 0 0 10px; padding-left: 20px; background: #fff; border: 1px solid #e2e2e2; gap: 11px; position: relative; }
.abc { display: flex; align-items: center; justify-content: center; width: 32px; height: 32px; border: 1px solid #8f8f8f; border-radius: 5px; font: 9.500px "Liberation Sans", sans-serif; color: #777; flex: none; }
.gal-arrows { position: absolute; right: 6px; top: 8px; bottom: 6px; display: flex; flex-direction: column; justify-content: space-between; align-items: center; }
.gal-arrows .caret { margin: 0; border-top-color: #777; }
.gal-arrows .c-up { border-top: 0; border-bottom: 4px solid #777; }
.gal-arrows .c-more { border-top-width: 5px; box-shadow: 0 -2px 0 -1px #777; }
.sep-last { margin-left: 15px; }
.g-last { padding-left: 6px; grid-template-columns: repeat(2, 34px); }

/* workspace */
.workspace { flex: 1; display: flex; min-height: 0; }
.libs { width: 210px; flex: none; background: #f4f4f4; border-right: 1px solid #d6d6d6; display: flex; flex-direction: column; padding-right: 2px; }
.libs-head { display: flex; align-items: center; justify-content: space-between; height: 28px; padding: 0 8px 0 5px; font-size: 13px; color: #444; }
.search-row { display: flex; align-items: center; height: 28px; margin-top: 3px; padding-left: 11px; }
.drawer { width: 16px; height: 16px; fill: #3f3f3f; }
.search-row .caret { margin-left: 1px; }
.search { display: flex; align-items: center; justify-content: space-between; width: 141px; height: 28px; margin-left: 2px; background: #f5f5f5; border: 1px solid #e0e0e0; border-radius: 3px; padding: 0 3px 0 7px; color: #888; font-size: 12.500px; }
.updown { display: flex; flex-direction: column; gap: 3px; margin-left: 5px; }
.updown span { display: flex; align-items: center; justify-content: center; width: 20px; height: 12px; border: 1px solid #e0e0e0; border-radius: 2px; }
.tiny { width: 9px; height: 6px; fill: none; stroke: #888; stroke-width: 1; }
.lib-item { display: flex; align-items: center; height: 35px; margin-bottom: 2px; padding-left: 12px; font-size: 12px; color: #222; flex: none; }
.lib-name { flex: 1; white-space: nowrap; margin-left: 4px; }
.tri { width: 0; height: 0; border-left: 6px solid #b4b4b4; border-top: 4.500px solid transparent; border-bottom: 4.500px solid transparent; flex: none; margin-right: 3px; }
.tri.down { border-top: 6px solid #777; border-left: 4.500px solid transparent; border-right: 4.500px solid transparent; border-bottom: 0; margin-right: 0; }
.lib-x { width: 8px; height: 8px; margin: 0 5px 0 5px; fill: none; stroke: #8a8a8a; stroke-width: 1.100; flex: none; }
.open, .my-lib { background: #e0e0e0; }
.my-lib { margin: 9px 0 0; }
.tiny14 { width: 13px; height: 13px; fill: none; stroke: #555; stroke-width: 1.100; margin-left: 7px; flex: none; }
.t-plus { margin-right: 4px; }
.dropbox { height: 58px; margin: 12px 18px 13px 20px; padding: 7px 14px 0 13px; border: 1.500px dashed #cfcfcf; border-radius: 4px; font-size: 12px; line-height: 15px; color: #b8b8b8; flex: none; width: 169px; }
.shapes { display: grid; grid-template-columns: repeat(4, 49px); grid-auto-rows: 49px; margin-top: 1px; }
.shapes svg { width: 49px; height: 49px; fill: #fff; stroke: #6b6b6b; stroke-width: 1; overflow: visible; }
.shapes .nofill { fill: none; }
.thick-s { stroke: #999; stroke-width: 1.800; }
.yes { font: 11px "Liberation Sans", sans-serif; text-anchor: middle; fill: #8a8a8a; stroke: none; }
.tb { font: 2.700px "Liberation Sans", sans-serif; fill: #888; stroke: none; text-anchor: start; }
.sf { fill: #333; stroke: none; }

/* centre */
.center { flex: 1; min-width: 0; display: flex; flex-direction: column; background: #f4f4f4; }
.docbar { display: flex; height: 25px; flex: none; background: #f4f4f4; }
.doctab { display: flex; align-items: center; width: 160px; background: #c0c0c0; padding: 0 12px 0 14px; color: #333; font-size: 12.500px; }
.docic { width: 12px; height: 14px; flex: none; }
.doctab span { margin-left: 8px; flex: 1; padding-top: 1px; }
.unsaved { width: 6px; height: 6px; border-radius: 50%; background: #f64848; }
.docadd { width: 23px; display: flex; align-items: center; justify-content: center; background: #f0f0f0; font: 24px/25px "Liberation Sans", sans-serif; color: #333; }
.hruler-row { display: flex; height: 18px; flex: none; }
.corner { width: 17px; background: #efefef; flex: none; }
.hruler { flex: 1; min-width: 0; overflow: hidden; background: #fafafa; border-top: 1px solid #e2e2e2; border-bottom: 1px solid #e2e2e2; }
.hr-in { display: flex; margin-left: -10.300px; }
.ruler-end { width: 13px; flex: none; }
.hr-tick { position: relative; flex: none; width: 37.830px; height: 16px; border-left: 1px solid #cfcfcf; padding-left: 1px; font: 10px/14px Roboto, sans-serif; color: #888; }
.hr-tick::after { content: ""; position: absolute; left: 50%; bottom: 0; height: 7px; border-left: 1px solid #d6d6d6; }
.canvas-row { flex: 1; min-height: 0; display: flex; }
.vruler { width: 17px; flex: none; overflow: hidden; background: #fafafa; border-right: 1px solid #e2e2e2; }
.vr-in { display: flex; flex-direction: column; margin-top: 10px; }
.vr-tick { position: relative; flex: none; height: 37.830px; border-top: 1px solid #cfcfcf; font: 10px/16px Roboto, sans-serif; color: #888; }
.vr-tick span { display: block; writing-mode: vertical-rl; transform: rotate(180deg); line-height: 14px; margin-top: 2px; height: 16px; text-align: right; }
.vr-tick::after { content: ""; position: absolute; right: 0; top: 50%; width: 7px; border-top: 1px solid #d6d6d6; }
.canvas { position: relative; flex: 1; min-width: 0; overflow: hidden; background: #e3e3e3; }
.page { position: absolute; left: 254px; top: 9px; width: 1123px; height: 1000px; background: #fff; border: 1px solid #b9b9b9; }
.grid { position: absolute; left: 37px; top: 37px; width: 1048px; height: 960px; border-left: 1px solid #e2e2e2; border-right: 1px solid #e2e2e2; border-top: 1px solid #e2e2e2;
  background-image:
    repeating-linear-gradient(90deg, transparent 0 37px, #e4e4e4 37px 37.830px),
    repeating-linear-gradient(180deg, transparent 0 37px, #e4e4e4 37px 37.830px),
    repeating-linear-gradient(90deg, transparent 0 18px, #eeeeee 18px 18.915px),
    repeating-linear-gradient(180deg, transparent 0 18px, #eeeeee 18px 18.915px); }
.entity { position: absolute; width: 201px; background: #fff; border: 1px solid #3a3a3a; box-shadow: 1px 1px 0 #bdbdbd; font: 16px/19px "Liberation Sans", sans-serif; letter-spacing: -0.3px; color: #222; white-space: nowrap; }
.e-head { height: 52px; display: flex; align-items: center; justify-content: center; border-bottom: 1px solid #3a3a3a; box-shadow: 0 1px 0 #aaa; }
.e-body { padding: 10px 0 0 3px; }
.big { font-size: 21px; line-height: 25px; letter-spacing: -0.15px; -webkit-text-stroke: 0.2px #222; margin: -1px 0 1px; }
.big-q { letter-spacing: 0.2px; }
.e-users { left: 75px; top: 75px; height: 294px; }
.e-company { left: 340px; top: 75px; height: 339px; }
.e-invoice { left: 604px; top: 75px; height: 275px; }
.e-client { left: 64px; top: 407px; height: 244px; }
.e-comanda { left: 340px; top: 441px; height: 164px; }
.e-comanda .e-body { padding-top: 9px; }
.e-cp { left: 585px; top: 407px; height: 168px; }
.e-produse { left: 830px; top: 407px; height: 168px; }
.e-srl { left: 56px; top: 704px; height: 200px; }
.e-setari { left: 277px; top: 704px; height: 200px; }
.red { background: #e8392b; }
.e-setari .e-body { padding-top: 14px; }
.vscroll { width: 13px; flex: none; background: #f2f2f2; padding: 54px 0 0 2px; }
.vthumb { display: block; width: 10px; height: 333px; border-radius: 5px; background: #bdbdbd; }
.hscroll { position: relative; display: flex; height: 12px; flex: none; background: #f6f6f6; padding: 1px 0 0 113px; border-top: 1px solid #fff; }
.hthumb { width: 1435px; height: 10px; border-radius: 5px; background: #bdbdbd; }
.hs-end { position: absolute; right: 0; top: 0; width: 13px; height: 12px; background: #e3e3e3; }
.palette-row { display: flex; align-items: center; height: 17px; flex: none; background: #f4f4f4; padding-left: 10px; }
.pal-ic { width: 14px; height: 14px; flex: none; }
.pal-c { margin: 0; border-width: 3px 2px 0; }
.swatches { display: flex; height: 15px; margin-left: 4px; flex: none; width: 1644px; }
.swatch { flex: 1; border-right: 1px solid #fff; }

/* right rail */
.rail { width: 34px; flex: none; background: #f4f4f4; border-left: 1px solid #d6d6d6; display: flex; flex-direction: column; align-items: center; }
.rail-top { height: 32px; display: flex; align-items: center; justify-content: center; flex: none; }
.rail-btn { display: flex; align-items: center; justify-content: center; width: 100%; height: 34px; margin-bottom: 10px; flex: none; }
.rail-btn.on { background: #0a7dfb; }
.rail-ic { width: 20px; height: 20px; fill: none; stroke: #444; stroke-width: 1.800; }
.rf2 { fill: #444; stroke: none; }
.on .rail-ic .rf { fill: #fff; stroke: none; }
.on .rail-ic .rs { stroke: #fff; }

/* status bar */
.statusbar { flex: none; display: flex; align-items: center; height: 36px; background: #f4f4f4; border-top: 1px solid #e2e2e2; border-bottom: 1px solid #e2e2e2; padding-left: 11px; padding-right: 29px; font-size: 12.500px; color: #333; }
.st-ic { fill: none; stroke: #444; stroke-width: 1.500; flex: none; }
.sfill { fill: #444; stroke: none; }
.st-pages { width: 22px; height: 14px; }
.st-sep { width: 1px; height: 24px; background: #d8d8d8; flex: none; }
.statusbar > .st-sep:first-of-type { margin-left: 11px; }
.page-sel { display: flex; align-items: center; width: 119px; padding: 0 7px 0 11px; }
.page-sel .caret { margin-left: auto; border-width: 5px 3px 0; }
.page-add { width: 44px; text-align: center; font: 700 20px "Liberation Sans", sans-serif; color: #444; }
.page-tab { width: 80px; text-align: center; color: #1680f0; font-weight: 700; }
.st-focus { width: 16px; height: 16px; }
.st-focus-t { margin-left: 8px; width: 31px; }
.st-play { width: 18px; height: 18px; margin-left: 15px; }
.zm { font: 700 17px "Liberation Sans", sans-serif; color: #444; text-align: center; }
.zm-minus { width: 12px; margin-left: 11px; }
.zm-plus { width: 12px; margin-left: 5px; }
.slider { position: relative; width: 82px; height: 4px; margin-left: 6px; background: #dedede; border-radius: 2px; }
.slider-fill { position: absolute; left: 0; top: 0; width: 22px; height: 4px; background: #bcbcbc; border-radius: 2px; }
.knob { position: absolute; left: 17px; top: -4px; width: 11px; height: 11px; border-radius: 50%; background: #fff; border: 2px solid #b8b8b8; }
.zoomval { display: flex; align-items: center; width: 43px; margin-left: 13px; color: #333; }
.st-full { width: 15px; height: 15px; margin-left: 14px; }
.st-fit { width: 16px; height: 16px; margin-left: 8px; }

/* taskbar */
.taskbar { flex: none; display: flex; align-items: center; height: 40px; background: #202327; color: #fff; padding-left: 16px; }
.start { width: 16px; height: 16px; flex: none; }
.tsearch { display: flex; align-items: center; position: relative; width: 343px; height: 40px; margin-left: 16px; background: #2f2f2f; border-top: 1px solid #555; border-left: 1px solid #444; padding-left: 12px; flex: none; }
.ts-ic { width: 15px; height: 15px; fill: none; stroke: #e6e6e6; stroke-width: 1.200; flex: none; }
.ts-t { margin-left: 12px; font: 14.500px "Open Sans", sans-serif; color: #d8d8d8; }
.ts-art { position: absolute; right: 0; top: 0; width: 72px; height: 39px; overflow: visible; }
.tk-icons { display: flex; }
.tk { position: relative; display: flex; align-items: center; justify-content: center; width: 49px; height: 40px; flex: none; }
.tk-gap { margin-left: 2px; }
.tk svg { width: 24px; height: 24px; }
.active-app { background: #4c4d52; }
.run::after { content: ""; position: absolute; left: 4px; right: 5px; bottom: 0; height: 2px; background: #76c7d8; }
.badge { position: absolute; right: 7px; bottom: 3px; width: 15px; height: 15px; border-radius: 50%; background: #f50f15; font: 10px/15px "Open Sans", sans-serif; text-align: center; color: #fff; }
.ai { font: 700 7px "Liberation Sans", sans-serif; fill: #123; text-anchor: middle; }
.cc { font: italic 700 16px "Liberation Serif", serif; fill: #11a0e8; text-anchor: middle; }
.tray { display: flex; align-items: center; height: 40px; padding-right: 25px; font: 13px "Open Sans", sans-serif; color: #e4e4e4; }
.sun { width: 18px; height: 22px; border-radius: 50%; background: linear-gradient(#f9b90d, #e96c04); flex: none; }
.tr-temp { margin-left: 11px; }
.tr-cond { margin-left: 9px; }
.tr-ic { width: 16px; height: 16px; fill: none; stroke: #e4e4e4; stroke-width: 1.100; margin-left: 8px; flex: none; }
.tf { fill: #e4e4e4; }
.tr-chev { width: 13px; height: 13px; margin-left: 16px; margin-right: 1px; }
.tr-lang { margin-left: 9px; font-size: 12px; }
.tr-clock { display: flex; flex-direction: column; align-items: center; width: 64px; margin-left: 6px; font-size: 12px; line-height: 20px; }
.tr-notif { width: 18px; height: 18px; margin-left: 11px; }
```

FILE: script.js
```js
const palette = [
  '#a9121f','#c9102f','#e9445f','#f5647f','#fa9bb0','#2b8097','#38a7c4','#3fc0df','#5dd8f2','#a4ecfd',
  '#f5552a','#fe7d38','#fd961b','#fdb712','#fec659','#12967f','#18b69d','#1bcdb0','#66d9c4','#84ecd9',
  '#9a2e63','#c44e8c','#e464a8','#fb88cc','#f2c4dd','#638a13','#78a42c','#9abf24','#b3d24b','#d4e18f',
  '#2028aa','#3547dc','#7048ef','#8d70f7','#ae99f8','#fccb00','#fedb2a','#efe428','#fbf242','#fefc7c',
  '#9b54dc','#c456e8','#d26ef6','#bd8bf6','#dba5fd','#2f7f46','#3da258','#54ad79','#63bb88','#95d6a9',
  '#e7392a','#fe4b3c','#f96468','#fd7b7b','#fe938a','#2344a4','#3159d3','#3273f7','#6590fc','#8db1f7',
  '#703100','#953c00','#a94225','#ce5e3e','#e37a58','#168ddd','#2ea0f6','#42aefc','#38cafd','#6be1fe',
  '#784f38','#945f46','#b47450','#d48a60','#f69d6e','#8a7d70','#b4ab97','#cdcab6','#e5dece','#f5efe0',
  '#1c1c1c','#313131','#464646','#5b5b5b','#7c7c7c','#b6b6b6','#c9c9c9','#d8d8d8','#e6e6e6','#f3f3f3','#ffffff'
];
const sw = document.getElementById('sw');
palette.forEach(c => {
  const s = document.createElement('span');
  s.className = 'swatch';
  s.style.background = c;
  sw.appendChild(s);
});
const hr = document.getElementById('hr');
for (let v = -70; v <= 360; v += 10) {
  const t = document.createElement('span');
  t.className = 'hr-tick';
  t.textContent = v;
  hr.appendChild(t);
}
const vr = document.getElementById('vr');
for (let v = 0; v <= 210; v += 10) {
  const t = document.createElement('div');
  t.className = 'vr-tick';
  if (v <= 200) {
    const l = document.createElement('span');
    l.textContent = v;
    t.appendChild(l);
  }
  vr.appendChild(t);
}
```
